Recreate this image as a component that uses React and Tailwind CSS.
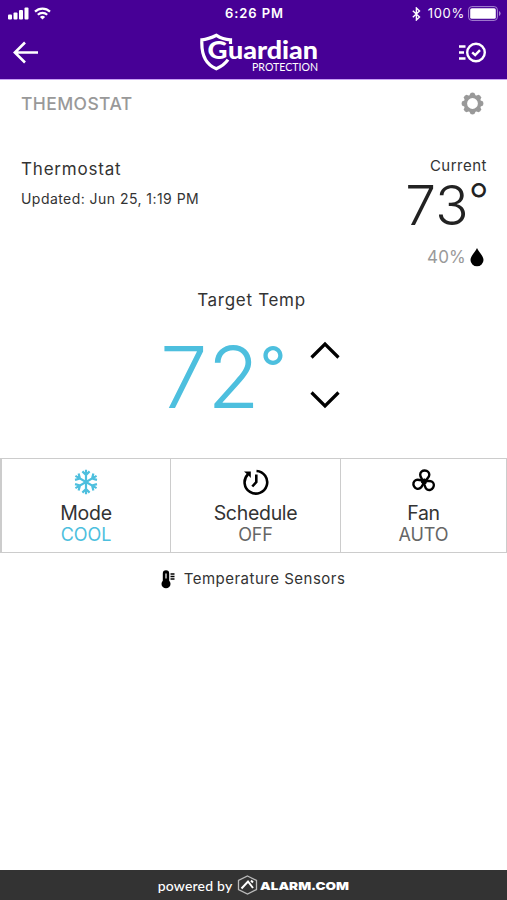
import React, { useState } from 'react';

function StatusBar() {
  return (
    <div className="flex h-[27px] items-center justify-between pl-2 pr-[6px] text-[13px] text-white">
      <div className="flex w-[160px] items-center gap-[5px]">
        <svg width="21" height="13" viewBox="0 0 21 13" fill="currentColor">
          <rect x="0" y="7.5" width="4" height="5" rx="1" />
          <rect x="5.5" y="5.5" width="4" height="7" rx="1" />
          <rect x="11" y="3" width="4" height="9.5" rx="1" />
          <rect x="16.5" y="0.5" width="4" height="12" rx="1" />
        </svg>
        <svg width="17" height="13" viewBox="0 0 17 13" fill="none" stroke="currentColor" strokeWidth="2.2">
          <path d="M1 4.6a10.8 10.8 0 0 1 15 0" />
          <path d="M3.8 7.7a6.8 6.8 0 0 1 9.4 0" />
          <path d="M8.5 12.6 5.9 10a3.8 3.8 0 0 1 5.2 0z" fill="currentColor" stroke="none" />
        </svg>
      </div>
      <div className="pt-px font-semibold tracking-[0.9px]">6:26 PM</div>
      <div className="flex w-[160px] items-center justify-end">
        <svg className="mr-[7px]" width="9" height="14" viewBox="0 0 9 14" fill="none" stroke="currentColor" strokeWidth="1.4">
          <path d="M0.8 3.8 7.5 10 4.4 13V1l3.1 3L0.8 10.2" />
        </svg>
        <span className="mr-[3px] pt-px tracking-[0.7px]">100%</span>
        <svg width="33" height="15" viewBox="0 0 33 15">
          <rect x="0.6" y="0.6" width="28.8" height="13.8" rx="3.2" fill="none" stroke="#a887d3" />
          <rect x="2.2" y="2.2" width="25.6" height="10.6" rx="1.6" fill="#fff" />
          <path d="M31 5q1.6.8 1.6 2.5T31 10z" fill="#a887d3" />
        </svg>
      </div>
    </div>
  );
}

function GuardianLogo() {
  return (
    <svg className="ml-[19px] mt-1 font-['Lato',sans-serif]" width="120" height="44" viewBox="0 0 120 44" fill="#fff">
      <path
        d="M30.500 11V6.800C24.500 6.500 20.500 5 16.500 2.300 12 4.500 7 6.500 1.900 6.800 1.200 20 4.500 31 16.300 35.700c5.500-2.200 9.500-5.800 11.700-9"
        fill="none"
        stroke="#fff"
        strokeWidth="3.2"
      />
      <text x="7.500" y="26" fontSize="24.500" fontWeight="900" textLength="20" lengthAdjust="spacingAndGlyphs">G</text>
      <text x="28" y="26" fontSize="24" fontWeight="900" textLength="90" lengthAdjust="spacingAndGlyphs">uardian</text>
      <text x="52" y="37.500" fontSize="11.500" textLength="66" lengthAdjust="spacingAndGlyphs">PROTECTION</text>
    </svg>
  );
}

function GearIcon() {
  return (
    <svg width="23" height="23" viewBox="-11.5 -11.5 23 23" fill="#999">
      {[0, 45, 90, 135, 180, 225, 270, 315].map(a => (
        <path key={a} d="M-3.800-6.500-1.900-10.500q1.900-.9 3.800 0L3.800-6.500z" transform={`rotate(${a})`} />
      ))}
      <circle r="7" fill="none" stroke="#999" strokeWidth="3.2" />
    </svg>
  );
}

function SnowflakeIcon() {
  return (
    <svg width="26" height="26" viewBox="-13 -13 26 26" fill="none" stroke="#4dbfde" strokeWidth="2.2">
      {[0, 60, 120, 180, 240, 300].map(a => (
        <path key={a} d="M0 0V-12.200M-3.600-10.600 0-7 3.600-10.600" transform={`rotate(${a})`} />
      ))}
    </svg>
  );
}

function ScheduleIcon() {
  return (
    <svg width="28" height="28" viewBox="0 0 28 28" fill="none" stroke="#000" strokeWidth="2.6">
      <path d="M14.500 3A11.300 11.300 0 1 1 6 6.200" />
      <path d="M2 3.500h6.800v6.500L6.600 7.500z" fill="#000" stroke="none" />
      <path d="M14.300 6.500V14l-4 4.500" />
    </svg>
  );
}

function FanIcon() {
  return (
    <svg width="26" height="26" viewBox="-13 -12.5 26 26" fill="none" stroke="#000" strokeWidth="2.4">
      {[0, 120, 240].map(a => (
        <path key={a} d="M-1.500 0C-.8-2.500-3.800-3.500-3.800-6.700-3.800-9.300-1.800-11 .8-11c2.700 0 4.500 1.900 4.500 4.300C5.300-3.500 2.500-3.200 1.500 0z" transform={`rotate(${a})`} />
      ))}
      <circle r="2.8" fill="#000" stroke="none" />
    </svg>
  );
}

const controls = [
  { label: 'Mode', value: 'COOL', Icon: SnowflakeIcon, color: 'text-[#4dbfde]' },
  { label: 'Schedule', value: 'OFF', Icon: ScheduleIcon, color: 'text-[#666]' },
  { label: 'Fan', value: 'AUTO', Icon: FanIcon, color: 'text-[#666]' },
];

export default function App() {
  const [target, setTarget] = useState(72);

  return (
    <div className="flex h-[900px] w-[507px] flex-col overflow-hidden bg-white font-['Inter',sans-serif] text-[#333]">
      <header className="h-20 border-b border-[#c9a0f5] bg-[#470096] text-white">
        <StatusBar />
        <div className="flex h-[52px] items-center justify-between pl-[13px] pr-5">
          <button className="w-[40px]">
            <svg width="26" height="24" viewBox="0 0 26 24" fill="none" stroke="currentColor" strokeWidth="2.6">
              <path d="M12 1.500 1.800 11.500 12 21.500M1.800 11.500H25" />
            </svg>
          </button>
          <GuardianLogo />
          <button className="flex w-[40px] justify-end">
            <svg width="29" height="22" viewBox="0 0 29 22" fill="none" stroke="currentColor" strokeWidth="2.4">
              <path d="M1 4.500h6.500M1 10.500h5M1 16.500h6.500" />
              <circle cx="18" cy="10.500" r="8.800" />
              <path d="m14.200 10.300 3 2.800 4.800-5" />
            </svg>
          </button>
        </div>
      </header>

      <div className="flex h-[48px] items-center justify-between pl-[21px] pr-[23px]">
        <h1 className="text-[17.500px] font-medium tracking-[0.4px] text-[#999]">THEMOSTAT</h1>
        <div className="pb-px">
          <GearIcon />
        </div>
      </div>

      <section className="flex h-[152px] justify-between pl-[21px] pr-5 pt-7">
        <div>
          <h2 className="text-[17px] leading-[27px] tracking-[0.8px]">Thermostat</h2>
          <p className="mt-[6px] text-[14px] leading-5 tracking-[0.45px]">Updated: Jun 25, 1:19 PM</p>
        </div>
        <div className="flex flex-col items-end">
          <p className="text-[15px] leading-[20px] tracking-[0.5px]">Current</p>
          <p className="-mr-[2px] flex items-start font-light text-[#222]">
            <span className="text-[55px] leading-[58px]">73</span>
            <span className="text-[45px] leading-[48px]">°</span>
          </p>
          <div className="mt-[13px] flex items-center gap-1 text-[17px] leading-5 text-[#999]">
            <span className="tracking-[0.2px]">40%</span>
            <svg className="mr-[3px]" width="14" height="20" viewBox="0 0 14 20" fill="#000">
              <path d="M7 1C5.500 5 .5 8.500.5 13a6.500 6.300 0 0 0 13 0C13.500 8.500 8.500 5 7 1z" />
            </svg>
          </div>
        </div>
      </section>

      <section className="h-[178px] pt-[8px]">
        <p className="pr-[4px] text-center text-[17px] leading-[24px] tracking-[0.7px]">Target Temp</p>
        <div className="mt-[20px] flex items-start pl-[160px]">
          <div className="flex w-[149.5px] items-start text-[#4dbfde]">
            <span className="text-[85px] font-light leading-[92px]">{target}</span>
            <span className="text-[58px] leading-[70px]">°</span>
          </div>
          <div className="flex flex-col gap-[32px] pt-[9px]">
            <button onClick={() => setTarget(target + 1)}>
              <svg width="30" height="18" viewBox="0 0 30 18" fill="none" stroke="#000" strokeWidth="3.2">
                <path d="M1.500 16.500 15 3l13.500 13.500" />
              </svg>
            </button>
            <button onClick={() => setTarget(target - 1)}>
              <svg width="30" height="18" viewBox="0 0 30 18" fill="none" stroke="#000" strokeWidth="3.2">
                <path d="M1.500 1.500 15 15 28.500 1.500" />
              </svg>
            </button>
          </div>
        </div>
      </section>

      <section className="grid h-[95px] grid-cols-[169px_170px_165px] divide-x divide-[#ccc] border border-l-2 border-[#ccc]">
        {controls.map(({ label, value, Icon, color }) => (
          <button key={label} className="flex flex-col items-center pt-[9px]">
            <div className="flex h-[28px] items-center">
              <Icon />
            </div>
            <span className="mt-[5px] text-[19.5px] leading-6 tracking-[-0.3px]">{label}</span>
            <span className={`text-[18px] leading-5 tracking-[-0.1px] ${color}`}>{value}</span>
          </button>
        ))}
      </section>

      <div className="mt-[14px] flex items-center justify-center gap-[9px] pr-px text-[15px] leading-6 tracking-[0.5px]">
        <svg width="14" height="19" viewBox="0 0 14 19" fill="#000">
          <path d="M1.800 3.500a3.200 3.200 0 0 1 6.400 0v7.200a4.500 4.500 0 1 1-6.400 0z" />
          <path d="M5 3.500v5" stroke="#fff" strokeWidth="1.2" />
          <path d="M9.500 4h4M9.500 6.500h4M9.500 9h4" stroke="#000" strokeWidth="1.5" />
        </svg>
        Temperature Sensors
      </div>

      <footer className="mt-auto flex h-[30px] items-center justify-center gap-[4px] bg-[#333] pl-[2px] text-white">
        <span className="font-['Lato',sans-serif] text-[14px] font-medium tracking-[0.2px]">powered by</span>
        <svg width="115" height="22" viewBox="0 0 115 22" fill="none" stroke="#fff">
          <path d="M11.500 2 20.500 6.500v9l-9 4.500-9-4.500v-9z" stroke="#bbb" strokeWidth="1.3" />
          <path d="M5.500 14.500 12 7.500l5 6.500M15 6.500l2 2" strokeWidth="2" />
          <text x="24" y="15.500" fontSize="11" fontWeight="900" fill="#fff" stroke="none" textLength="89" lengthAdjust="spacingAndGlyphs">ALARM.COM</text>
        </svg>
      </footer>
    </div>
  );
}
